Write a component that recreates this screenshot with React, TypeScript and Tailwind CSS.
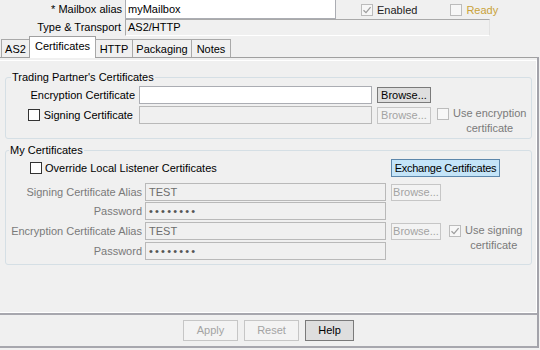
import clsx from 'clsx';

function Box({ checked = false, disabled = false }: { checked?: boolean; disabled?: boolean }) {
  return (
    <span
      className={clsx(
        'flex h-[12px] w-[12px] shrink-0 items-center justify-center border',
        disabled ? 'border-[#bcbcbc] bg-[#f7f7f7]' : 'border-[#333333] bg-white',
      )}
    >
      {checked && (
        <svg width="10" height="10" viewBox="0 0 10 10">
          <path d="M1.5 5.2 L4 7.6 L8.6 2.2" fill="none" stroke={disabled ? '#9d9d9d' : '#222'} strokeWidth="1.3" />
        </svg>
      )}
    </span>
  );
}

function Btn({
  label,
  disabled = false,
  className,
}: {
  label: string;
  disabled?: boolean;
  className?: string;
}) {
  return (
    <div
      className={clsx(
        'flex shrink-0 items-center justify-center whitespace-nowrap border leading-none',
        disabled ? 'border-[#c6c6c6] bg-[#f3f3f3] text-[#a3a3a3]' : 'border-[#7a7a7a] bg-[#dedede] text-black',
        className,
      )}
    >
      {label}
    </div>
  );
}

function Field({ value, disabled = false, className }: { value?: string; disabled?: boolean; className?: string }) {
  return (
    <div
      className={clsx(
        'flex h-[18px] shrink-0 items-center border pl-[3px] leading-none',
        disabled ? 'border-[#b9b9b9] bg-[#f0f0f0] text-[#6d6d6d]' : 'border-[#abadb3] bg-white text-black',
        className,
      )}
    >
      {value}
    </div>
  );
}

const dots = '••••••••';

const tabs = [
  { name: 'AS2', w: 'w-[29px]' },
  { name: 'Certificates', w: 'w-[67px]', active: true },
  { name: 'HTTP', w: 'w-[38px]' },
  { name: 'Packaging', w: 'w-[60px]' },
  { name: 'Notes', w: 'w-[40px]' },
];

export default function App() {
  return (
    <div className="h-[350px] w-[540px] overflow-hidden bg-[#f0f0f0] font-['Liberation_Sans',Arial,sans-serif] text-[11px] text-black">
      {/* header fields */}
      <div className="flex h-[19px] items-center">
        <div className="w-[122px] text-right">* Mailbox alias</div>
        <div className="-mt-[1px] ml-[3px] flex h-[20px] w-[211px] items-center border border-[#abadb3] bg-white pl-[2px]">
          myMailbox
        </div>
        <div className="ml-[25px] flex items-center gap-[4px] pt-[1px]">
          <Box checked disabled />
          <span className="text-[#222]">Enabled</span>
        </div>
        <div className="ml-[33px] flex items-center gap-[4px] pt-[1px]">
          <Box disabled />
          <span className="text-[#c9a23a]">Ready</span>
        </div>
      </div>
      <div className="flex h-[17px] items-center">
        <div className="w-[121px] text-right">Type &amp; Transport</div>
        <div className="ml-[4px] flex h-[17px] w-[365px] items-center border border-[#a9a9a9] border-b-white border-r-[#e2e2e2] pl-[2px]">
          AS2/HTTP
        </div>
      </div>

      {/* tabs */}
      <div className="relative z-10 flex h-[21px] items-end pl-[1px]">
        {tabs.map((t) =>
          t.active ? (
            <div
              key={t.name}
              className={clsx(
                '-mb-[1px] -ml-[1px] h-[22px] border border-b-0 border-[#a0a0a0] bg-white pt-[3px] text-center leading-[13px]',
                t.w,
              )}
            >
              {t.name}
            </div>
          ) : (
            <div
              key={t.name}
              className={clsx(
                '-ml-[1px] flex h-[18px] items-center justify-center border border-b-0 border-[#a9a9a9] bg-[#f0f0f0] pt-[1px] first:ml-0',
                t.w,
              )}
            >
              {t.name}
            </div>
          ),
        )}
      </div>

      <div className="w-[539px] border-r-2 border-[#a3a3aa]">
        {/* tab content */}
        <div className="border-t border-[#a0a0a0]">
          <div className="mt-[2px] h-[253px] border-y border-r border-white pt-[9px]">
            <fieldset className="ml-[5px] w-[527px] rounded-[3px] border border-[#d5dfe5] pb-[14px]">
              <legend className="ml-[5px] px-[1px] leading-[14px]">Trading Partner's Certificates</legend>
              <div className="mt-[2px] flex h-[18px] items-center">
                <div className="w-[129px] text-right">Encryption Certificate</div>
                <Field className="ml-[4px] w-[233px]" />
                <Btn label="Browse..." className="ml-[5px] h-[16px] w-[54px]" />
              </div>
              <div className="mt-[2px] flex h-[18px] items-center">
                <div className="flex w-[129px] items-center justify-end gap-[4px] pr-[2px]">
                  <Box />
                  <span>Signing Certificate</span>
                </div>
                <Field className="ml-[4px] w-[233px]" disabled />
                <Btn label="Browse..." disabled className="ml-[5px] h-[17px] w-[54px]" />
                <div className="ml-[6px] flex h-[18px] items-start gap-[4px] pt-[2px]">
                  <Box disabled />
                  <div className="-mt-[2px] text-center leading-[15px] text-[#7a7a7a]">
                    Use encryption
                    <br />
                    certificate
                  </div>
                </div>
              </div>
            </fieldset>

            <fieldset className="ml-[5px] mt-[4px] w-[527px] rounded-[3px] border border-[#d5dfe5] pb-[4px]">
              <legend className="ml-[3px] px-[1px] leading-[14px]">My Certificates</legend>
              <div className="mt-[2px] flex h-[18px] items-center">
                <div className="flex w-[385px] items-center gap-[3px] pl-[24px]">
                  <Box />
                  <span>Override Local Listener Certificates</span>
                </div>
                <div className="flex h-[18px] w-[109px] items-center justify-center whitespace-nowrap border border-[#5d87ab] bg-[#c4e4f8] leading-none tracking-[-0.25px]">
                  Exchange Certificates
                </div>
              </div>

              <div className="mt-[6px] flex h-[18px] items-center">
                <div className="w-[136px] text-right text-[#7a7a7a]">Signing Certificate Alias</div>
                <Field value="TEST" disabled className="ml-[3px] w-[241px]" />
                <Btn label="Browse..." disabled className="ml-[5px] h-[17px] w-[50px]" />
              </div>
              <div className="mt-[1px] flex h-[18px] items-center">
                <div className="w-[136px] text-right text-[#7a7a7a]">Password</div>
                <Field value={dots} disabled className="ml-[3px] w-[241px] tracking-[2.2px] text-[#555]" />
              </div>
              <div className="mt-[2px] flex h-[18px] items-center">
                <div className="w-[136px] text-right text-[#7a7a7a]">Encryption Certificate Alias</div>
                <Field value="TEST" disabled className="ml-[3px] w-[241px]" />
                <Btn label="Browse..." disabled className="ml-[5px] h-[17px] w-[50px]" />
                <div className="ml-[8px] flex h-[18px] items-start gap-[4px] pt-[3px]">
                  <Box checked disabled />
                  <div className="-mt-[2px] text-center leading-[15px] text-[#7a7a7a]">
                    Use signing
                    <br />
                    certificate
                  </div>
                </div>
              </div>
              <div className="mt-[2px] flex h-[18px] items-center">
                <div className="w-[136px] text-right text-[#7a7a7a]">Password</div>
                <Field value={dots} disabled className="ml-[3px] w-[241px] tracking-[2.2px] text-[#555]" />
              </div>
            </fieldset>
          </div>
        </div>

        {/* button bar */}
        <div className="flex h-[35px] items-center justify-center gap-[6px] border-y-2 border-[#a7a7ae]">
          <Btn label="Apply" disabled className="h-[21px] w-[55px]" />
          <Btn label="Reset" disabled className="h-[21px] w-[55px]" />
          <Btn label="Help" className="h-[21px] w-[49px]" />
        </div>
      </div>
    </div>
  );
}
